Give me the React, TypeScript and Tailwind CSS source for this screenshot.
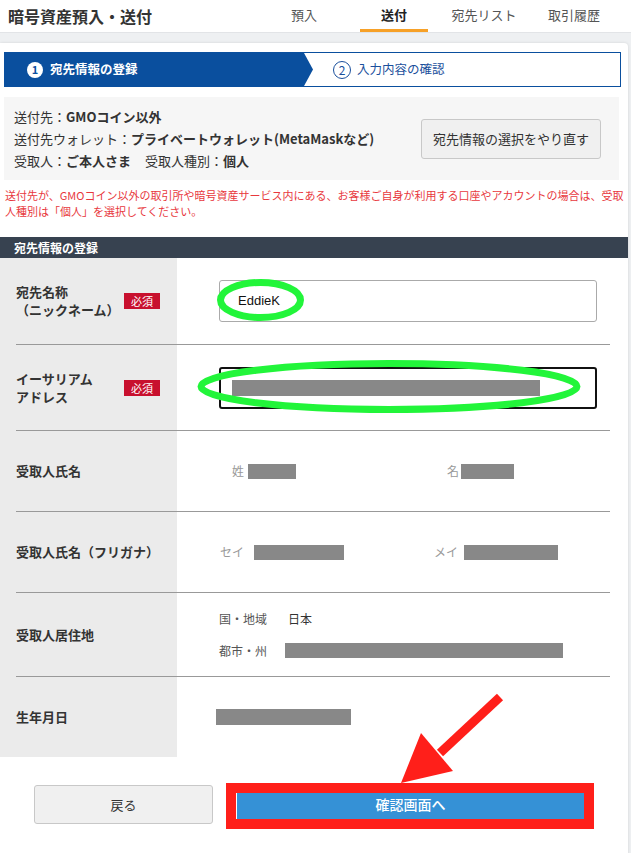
import React from 'react';

const tabs = [
  { label: '預入', active: false },
  { label: '送付', active: true },
  { label: '宛先リスト', active: false },
  { label: '取引履歴', active: false },
];

const Required: React.FC = () => (
  <span className="bg-[#c8102e] text-white text-[11px] leading-[16px] w-[36px] h-[16px] flex items-center justify-center">
    必須
  </span>
);

const Redact: React.FC<{ w: string }> = ({ w }) => (
  <span className={`block h-[15px] bg-[#888888] ${w}`} />
);

const App: React.FC = () => {
  return (
    <div className="relative w-[631px] min-h-[853px] overflow-hidden bg-[#eef0f2] text-[#333] font-['Noto_Sans_CJK_JP','Noto_Sans',sans-serif]">
      {/* header */}
      <div className="h-[33px] bg-white border-b border-[#e2e4e7] flex items-center">
        <h1 className="pl-[8px] text-[16px] font-bold text-[#333] leading-none">暗号資産預入・送付</h1>
        <div className="ml-auto mr-[12px] flex h-full">
          {tabs.map((t) => (
            <div key={t.label} className="w-[90px] h-full flex flex-col items-center">
              <span className={`flex-1 flex items-center text-[13px] ${t.active ? 'font-bold text-[#222]' : 'text-[#555]'}`}>
                {t.label}
              </span>
              <span className={`h-[3px] w-[68px] ${t.active ? 'bg-[#f7a128]' : 'bg-transparent'}`} />
            </div>
          ))}
        </div>
      </div>

      <div className="pt-[10px]">
        <div className="w-[628px] bg-white rounded-tr-[4px] shadow-[0_0_3px_rgba(0,0,0,0.12)] pt-[9px] pb-[40px]">
          {/* steps */}
          <div className="ml-[4px] mr-[7px] h-[35px] border border-[#0a4f9e] flex">
            <div className="w-[308px] h-full bg-[#0a4f9e] flex items-center pl-[22px] gap-[7px] [clip-path:polygon(0_0,calc(100%-9px)_0,100%_50%,calc(100%-9px)_100%,0_100%)]">
              <span className="w-[16px] h-[16px] rounded-full bg-white text-[#0a4f9e] text-[11px] font-bold flex items-center justify-center">1</span>
              <span className="text-white text-[12.5px] font-bold">宛先情報の登録</span>
            </div>
            <div className="flex items-center pl-[20px] gap-[6px] text-[#1a4f9c]">
              <span className="w-[18px] h-[18px] rounded-full border border-[#1a4f9c] text-[12px] flex items-center justify-center">2</span>
              <span className="text-[12.5px]">入力内容の確認</span>
            </div>
          </div>

          {/* info box */}
          <div className="ml-[4px] mr-[9px] mt-[10px] h-[83px] bg-[#f6f6f6] flex items-center pl-[10px] pr-[18px]">
            <div className="text-[13px] leading-[22px] text-[#333]">
              <div>送付先：<b>GMOコイン以外</b></div>
              <div>送付先ウォレット：<b>プライベートウォレット(MetaMaskなど)</b></div>
              <div>
                受取人：<b>ご本人さま</b>
                <span className="ml-[14px]">受取人種別：<b>個人</b></span>
              </div>
            </div>
            <button className="ml-auto w-[180px] h-[40px] bg-[#f0f0f0] border border-[#c8c8c8] rounded-[3px] text-[13px] text-[#333]">
              宛先情報の選択をやり直す
            </button>
          </div>

          {/* note */}
          <div className="mt-[7px] pl-[5px] text-[11px] leading-[16px] text-[#e8383d]">
            <div className="whitespace-nowrap">
              送付先が、GMOコイン以外の取引所や暗号資産サービス内にある、お客様ご自身が利用する口座やアカウントの場合は、受取
            </div>
            <div className="whitespace-nowrap">人種別は「個人」を選択してください。</div>
          </div>

          {/* section header */}
          <div className="mt-[18px] h-[21px] bg-[#374250] flex items-center pl-[14px]">
            <span className="text-white text-[12px] font-bold">宛先情報の登録</span>
          </div>

          {/* form table */}
          <div className="bg-[linear-gradient(to_right,#ebebeb_177px,#ffffff_177px)]">
            <div className="ml-[16px] mr-[18px]">
              <div className="h-[87px] flex border-b border-[#999]">
                <div className="w-[161px] flex items-center">
                  <div className="w-[108px] text-[13px] font-bold leading-[18px]">
                    <div>宛先名称</div>
                    <div>（ニックネーム）</div>
                  </div>
                  <Required />
                </div>
                <div className="flex-1 flex items-center pl-[42px]">
                  <div className="w-[378px] h-[42px] border border-[#aaa] rounded-[3px] flex items-center pl-[18px] text-[13px] text-[#111] font-['Liberation_Sans',sans-serif]">
                    EddieK
                  </div>
                </div>
              </div>

              <div className="h-[86px] flex border-b border-[#999]">
                <div className="w-[161px] flex items-center">
                  <div className="w-[108px] text-[13px] font-bold leading-[18px]">
                    <div>イーサリアム</div>
                    <div>アドレス</div>
                  </div>
                  <Required />
                </div>
                <div className="flex-1 flex items-center pl-[42px]">
                  <div className="w-[378px] h-[42px] border-2 border-[#111] rounded-[3px] flex items-center pl-[11px]">
                    <span className="block w-[308px] h-[16px] bg-[#888888]" />
                  </div>
                </div>
              </div>

              <div className="h-[81px] flex border-b border-[#999]">
                <div className="w-[161px] flex items-center text-[13px] font-bold">受取人氏名</div>
                <div className="flex-1 flex items-center pl-[55px] text-[12px] text-[#999]">
                  <div className="w-[215px] flex items-center gap-[4px]">
                    <span>姓</span>
                    <Redact w="w-[48px]" />
                  </div>
                  <div className="flex items-center gap-[2px]">
                    <span>名</span>
                    <Redact w="w-[53px]" />
                  </div>
                </div>
              </div>

              <div className="h-[81px] flex border-b border-[#999]">
                <div className="w-[161px] flex items-center text-[13px] font-bold">受取人氏名（フリガナ）</div>
                <div className="flex-1 flex items-center pl-[43px] text-[12px] text-[#999]">
                  <div className="w-[214px] flex items-center gap-[10px]">
                    <span>セイ</span>
                    <Redact w="w-[90px]" />
                  </div>
                  <div className="flex items-center gap-[6px]">
                    <span>メイ</span>
                    <Redact w="w-[94px]" />
                  </div>
                </div>
              </div>

              <div className="h-[84px] flex border-b border-[#999]">
                <div className="w-[161px] flex items-center text-[13px] font-bold">受取人居住地</div>
                <div className="flex-1 flex flex-col justify-center pl-[42px] gap-[14px] text-[12px] text-[#555]">
                  <div className="flex items-center">
                    <span className="w-[69px]">国・地域</span>
                    <span className="text-[#333]">日本</span>
                  </div>
                  <div className="flex items-center">
                    <span className="w-[66px]">都市・州</span>
                    <Redact w="w-[278px]" />
                  </div>
                </div>
              </div>

              <div className="h-[80px] flex">
                <div className="w-[161px] flex items-center text-[13px] font-bold">生年月日</div>
                <div className="flex-1 flex items-center pl-[39px]">
                  <Redact w="w-[135px] h-[16px]" />
                </div>
              </div>
            </div>
          </div>

          {/* buttons */}
          <div className="pt-[28px] pl-[34px] flex gap-[24px]">
            <button className="w-[179px] h-[39px] bg-[#f0f0f0] border border-[#c8c8c8] rounded-[3px] text-[13px] text-[#333]">
              戻る
            </button>
            <button className="w-[347px] h-[39px] bg-[#3591d6] text-white text-[14px] font-medium">
              確認画面へ
            </button>
          </div>
        </div>
      </div>

      {/* annotations */}
      <svg className="absolute left-0 top-0 pointer-events-none" width="631" height="853" viewBox="0 0 631 853">
        <ellipse cx="260.5" cy="300" rx="40" ry="17.5" fill="none" stroke="#22f53a" strokeWidth="7" />
        <ellipse cx="389" cy="386.5" rx="188" ry="23" fill="none" stroke="#22f53a" strokeWidth="7" />
        <rect x="231" y="788" width="358" height="36" fill="none" stroke="#ff1f1a" strokeWidth="10" />
        <line x1="500" y1="697" x2="440" y2="753" stroke="#ff1f1a" strokeWidth="9" />
        <polygon points="401,783 421,733 453,771" fill="#ff1f1a" />
      </svg>
    </div>
  );
};

export default App;
